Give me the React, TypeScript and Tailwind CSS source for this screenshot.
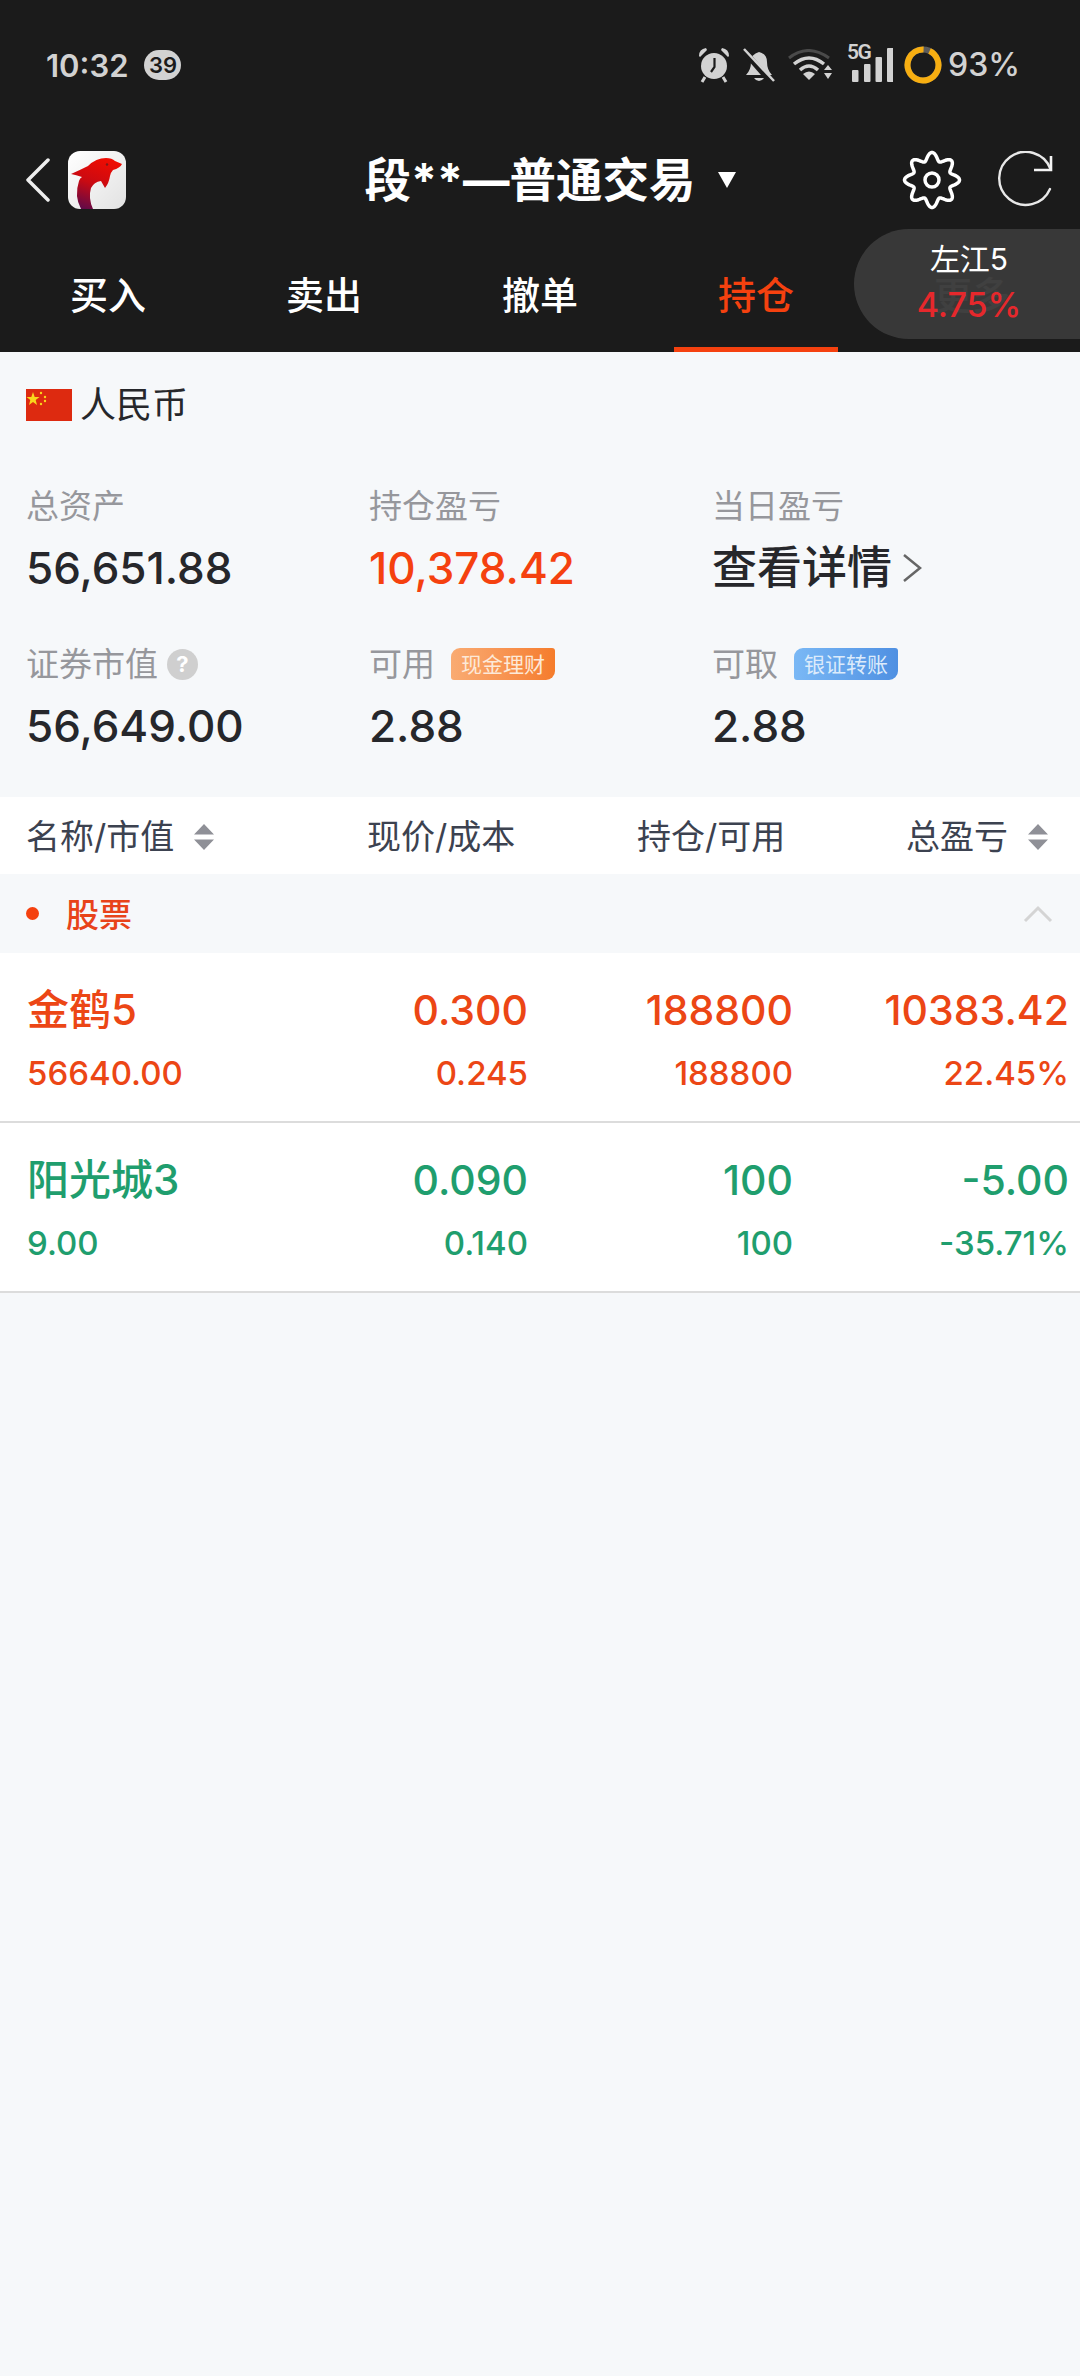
import React from "react";

const FONT = "font-['Inter','Noto_Sans_CJK_SC',sans-serif]";

function flowerPath() {
  const pts: string[] = [];
  for (let i = 0; i < 240; i++) {
    const t = (i / 240) * Math.PI * 2;
    const r = 23.5 + 4 * Math.cos(8 * t);
    pts.push(`${(30 + r * Math.sin(t)).toFixed(2)} ${(30 - r * Math.cos(t)).toFixed(2)}`);
  }
  return "M" + pts.join(" L") + " Z";
}
const FLOWER = flowerPath();

function Alarm() {
  return (
    <svg width="32" height="36" viewBox="0 0 32 36" className="shrink-0">
      <path d="M1 9 Q1 2 8 1 L9 3 L2 10 Z M31 9 Q31 2 24 1 L23 3 L30 10 Z" fill="#d2d2d2" />
      <circle cx="16" cy="19" r="13" fill="#d2d2d2" />
      <path d="M16.500 11 V20 L13 25" stroke="#1b1b1b" strokeWidth="2.200" fill="none" />
      <path d="M7 30 L4 35 M25 30 L28 35" stroke="#d2d2d2" strokeWidth="3" />
    </svg>
  );
}
function BellOff() {
  return (
    <svg width="32" height="34" viewBox="0 0 32 34" className="shrink-0">
      <path d="M3 27 Q8 22 8 14 Q8 6 16 4 Q24 6 24 14 Q24 22 29 27 Z" fill="#d2d2d2" />
      <path d="M11 30 H21 Q19 33 16 33 Q13 33 11 30Z" fill="#d2d2d2" />
      <path d="M0 2 L28 34" stroke="#1b1b1b" strokeWidth="6" />
      <path d="M1 1 L31 33" stroke="#d2d2d2" strokeWidth="2.500" />
    </svg>
  );
}
function Wifi() {
  return (
    <svg width="46" height="32" viewBox="0 0 46 32" className="shrink-0">
      <path d="M1 9 Q20 -6 41 9" stroke="#4a4a4a" strokeWidth="3" fill="none" />
      <path d="M6 15 Q21 3 36 15" stroke="#d2d2d2" strokeWidth="3.500" fill="none" />
      <path d="M12 21 Q21 13 30 21" stroke="#d2d2d2" strokeWidth="3.500" fill="none" />
      <path d="M15 25 Q21 20 27 25 L21 31 Z" fill="#d2d2d2" />
      <path d="M36 21 L40 16 L44 21 Z M36 24 H44 L40 30 Z" fill="#d2d2d2" />
    </svg>
  );
}
function Signal() {
  return (
    <svg width="46" height="34" viewBox="0 0 46 34" className="shrink-0">
      <rect x="5" y="22" width="6.500" height="12" rx="1" fill="#d2d2d2" />
      <rect x="17" y="16" width="6.500" height="18" rx="1" fill="#d2d2d2" />
      <rect x="28.500" y="9" width="6.500" height="25" rx="1" fill="#d2d2d2" />
      <rect x="40" y="0" width="6.500" height="34" rx="1" fill="#d2d2d2" />
    </svg>
  );
}
function Ring() {
  return (
    <svg width="38" height="38" viewBox="0 0 38 38" className="shrink-0">
      <circle cx="19" cy="19" r="15.500" fill="none" stroke="#5c5c5c" strokeWidth="6" />
      <circle cx="19" cy="19" r="15.500" fill="none" stroke="#f7ae11" strokeWidth="6" strokeDasharray="90.600 97.400" transform="rotate(-65 19 19)" />
    </svg>
  );
}
function Logo() {
  return (
    <div className="w-[58px] h-[58px] rounded-[12px] bg-gradient-to-br from-[#ffffff] to-[#e2e2e2] overflow-hidden shrink-0">
      <svg width="58" height="58" viewBox="0 0 58 58">
        <defs>
          <linearGradient id="dolphin" x1="0.6" y1="0" x2="0.25" y2="1">
            <stop offset="0" stopColor="#ee0c02" />
            <stop offset="0.5" stopColor="#c90a12" />
            <stop offset="1" stopColor="#620a48" />
          </linearGradient>
        </defs>
        <path d="M3 23 Q12 19 20 15 Q28 7 38 7 Q44 7 47 10 L54 13 Q52 17 45 19 Q43 21 42 25 Q41 32 37 37 L33 30 Q26 31 23 37 Q20 47 25 58 H13 Q6 45 11 30 Q12 27 14 26 Q8 24 3 23 Z" fill="url(#dolphin)" />
        <circle cx="39" cy="13.500" r="1.200" fill="#7a1a1a" />
      </svg>
    </div>
  );
}
function Gear() {
  return (
    <svg width="60" height="60" viewBox="0 0 60 60" className="shrink-0">
      <path d={FLOWER} fill="none" stroke="#fff" strokeWidth="3.500" strokeLinejoin="round" />
      <circle cx="30" cy="30" r="7" fill="none" stroke="#fff" strokeWidth="3.500" />
    </svg>
  );
}
function Refresh() {
  return (
    <svg width="58" height="58" viewBox="0 0 58 58" className="shrink-0">
      <path d="M53 38 A26.500 26.500 0 1 1 53.500 18" fill="none" stroke="#e8e8e8" strokeWidth="2.400" strokeLinecap="round" />
      <path d="M54 5 V19 H37" fill="none" stroke="#f4f4f4" strokeWidth="2.600" />
    </svg>
  );
}
function SortIcon() {
  return (
    <svg width="20" height="26" viewBox="0 0 20 26" className="shrink-0">
      <path d="M10 0 L20 10.500 H0 Z M0 15.500 H20 L10 26 Z" fill="#8f9097" />
    </svg>
  );
}

function Stat({ label, value, tone, extra }: { label: string; value: React.ReactNode; tone?: string; extra?: React.ReactNode }) {
  return (
    <div className="flex flex-col">
      <div className="flex items-center h-[36px] text-[33px] leading-[36px] text-[#96979c]">
        <span>{label}</span>
        {extra}
      </div>
      <div className={`mt-[26px] h-[36px] flex items-center text-[44px] font-medium leading-[36px] ${tone ?? "text-[#26272b]"}`}>{value}</div>
    </div>
  );
}

function Row({ c, name, sub, a, b, d, e, f, g }: { c: string; name: string; sub: string; a: string; b: string; d: string; e: string; f: string; g: string }) {
  return (
    <div className={`bg-white h-[170px] border-b-2 border-[#dcdcdc] pl-[27px] pr-[11px] pt-[37px] font-medium ${c}`}>
      <div className="flex items-center h-[40px] text-[41px] leading-[40px]">
        <div className="flex-1 text-[42px]">{name}</div>
        <div className="w-[270px] text-right">{a}</div>
        <div className="w-[265px] text-right">{d}</div>
        <div className="w-[276px] text-right">{f}</div>
      </div>
      <div className="flex items-center h-[36px] mt-[25px] text-[33px] leading-[36px]">
        <div className="flex-1">{sub}</div>
        <div className="w-[270px] text-right">{b}</div>
        <div className="w-[265px] text-right">{e}</div>
        <div className="w-[276px] text-right">{g}</div>
      </div>
    </div>
  );
}

export default function App() {
  const tabs = ["买入", "卖出", "撤单", "持仓", "更多"];
  return (
    <div className={`w-[1080px] h-[2376px] bg-[#f6f8fa] overflow-hidden ${FONT}`}>
      <div className="bg-[#1b1b1b] h-[352px] relative">
        <div className="flex items-center h-[130px] pl-[46px] pr-[60px] text-[#d2d2d2]">
          <span className="text-[31px] font-semibold leading-none">10:32</span>
          <span className="ml-[16px] w-[37px] h-[30px] rounded-full bg-[#d2d2d2] text-[#1b1b1b] text-[22px] font-semibold flex items-center justify-center leading-none">39</span>
          <div className="flex-1" />
          <div className="flex items-center gap-[13px]">
            <Alarm />
            <BellOff />
            <Wifi />
            <div className="relative">
              <Signal />
              <span className="absolute left-0 top-[-6px] text-[21px] font-semibold leading-none font-['Roboto'] tracking-[-1.5px]">5G</span>
            </div>
          </div>
          <div className="ml-[11px]"><Ring /></div>
          <span className="ml-[6px] text-[32px] font-medium leading-none">93%</span>
        </div>
        <div className="flex items-center h-[60px] mt-[20px] pl-[26px] pr-[25px] relative">
          <svg width="24" height="44" viewBox="0 0 24 44" className="shrink-0">
            <path d="M22 2 L2 22 L22 42" fill="none" stroke="#eee" strokeWidth="3.500" strokeLinecap="round" strokeLinejoin="round" />
          </svg>
          <div className="ml-[18px]"><Logo /></div>
          <div className="flex-1 flex items-center justify-center pl-[72px] text-white font-bold text-[46.5px] leading-none">
            <span>段**—普通交易</span>
            <svg width="18" height="16" viewBox="0 0 18 16" className="ml-[22px]"><path d="M0 0 H18 L9 16 Z" fill="#fff" /></svg>
          </div>
          <Gear />
          <div className="ml-[35px]"><Refresh /></div>
        </div>
        <div className="flex h-[100px] mt-[42px] relative">
          {tabs.map((t, i) => (
            <div key={t} className={`w-[216px] flex justify-center ${i === 3 ? "text-[#f5410f]" : "text-white"} text-[38px] font-medium`}>
              <div className={`h-[100px] flex items-center ${i === 3 ? "w-[164px] justify-center border-b-[5px] border-[#f5410f] pb-[9px]" : "pb-[14px]"}`}>{t}</div>
            </div>
          ))}
          <div className="absolute left-[854px] top-[-23px] w-[226px] h-[110px] rounded-l-[55px] bg-[#3a3a3a]/97 flex flex-col items-center pl-[4px] pt-[8px]">
            <span className="text-white text-[30px] leading-[44px]">左江5</span>
            <span className="text-[#e6282c] text-[34px] font-medium leading-[47px]">4.75%</span>
          </div>
        </div>
      </div>

      <div className="h-[445px] pl-[26px]">
        <div className="flex items-center h-[106px]">
          <svg width="46" height="32" viewBox="0 0 46 32" className="shrink-0">
            <rect width="46" height="32" fill="#dd2a10" />
            <path d="M7 3 L8.700 8 L13.500 8 L9.700 11 L11 16 L7 13 L3 16 L4.300 11 L0.500 8 L5.300 8 Z" fill="#f9d71c" />
            <circle cx="15" cy="4" r="1.200" fill="#f9d71c" />
            <circle cx="19" cy="8" r="1.200" fill="#f9d71c" />
            <circle cx="19" cy="12" r="1.200" fill="#f9d71c" />
            <circle cx="15" cy="15" r="1.200" fill="#f9d71c" />
          </svg>
          <span className="ml-[8px] text-[36px] text-[#26272b] leading-none">人民币</span>
        </div>
        <div className="grid grid-cols-[343px_343px_1fr] gap-y-[60px] mt-[30px]">
          <Stat label="总资产" value="56,651.88" />
          <Stat label="持仓盈亏" value="10,378.42" tone="text-[#f5410f]" />
          <Stat
            label="当日盈亏"
            value={
              <>
                <span className="text-[45px]">查看详情</span>
                <svg width="22" height="32" viewBox="0 0 22 32" className="ml-[9px]"><path d="M3 3 L19 16 L3 29" fill="none" stroke="#666" strokeWidth="2.500" /></svg>
              </>
            }
          />
          <Stat
            label="证券市值"
            value="56,649.00"
            extra={<span className="ml-[9px] w-[31px] h-[31px] rounded-full bg-[#cfcfcf] text-white text-[22px] font-bold flex items-center justify-center leading-none">?</span>}
          />
          <Stat
            label="可用"
            value="2.88"
            extra={<span className="ml-[16px] h-[32px] w-[104px] rounded-tl-[9px] rounded-br-[9px] rounded-tr-[3px] rounded-bl-[3px] bg-gradient-to-r from-[#f9ab72] to-[#f57c2a] text-[#fde9d8] text-[21px] flex items-center justify-center leading-none">现金理财</span>}
          />
          <Stat
            label="可取"
            value="2.88"
            extra={<span className="ml-[16px] h-[32px] w-[104px] rounded-tl-[9px] rounded-br-[9px] rounded-tr-[3px] rounded-bl-[3px] bg-gradient-to-r from-[#7ab8f5] to-[#4f90e2] text-[#dcebfb] text-[21px] flex items-center justify-center leading-none">银证转账</span>}
          />
        </div>
      </div>

      <div className="bg-white h-[77px] flex items-center pl-[26px] pr-[32px] pt-[2px] text-[#3c4250] text-[34px] leading-none">
        <div className="flex items-center w-[341px]">
          <span>名称/市值</span>
          <span className="ml-[20px]"><SortIcon /></span>
        </div>
        <div className="w-[169px]">现价/成本</div>
        <div className="ml-[101px] w-[150px]">持仓/可用</div>
        <div className="flex-1 flex items-center justify-end">
          <span>总盈亏</span>
          <span className="ml-[20px]"><SortIcon /></span>
        </div>
      </div>
      <div className="h-[79px] flex items-center pl-[26px] pr-[27px] text-[#e8431a]">
        <span className="w-[13px] h-[13px] rounded-full bg-[#f5410f]" />
        <span className="ml-[27px] pt-[5px] text-[33px] font-medium flex-1">股票</span>
        <svg width="30" height="18" viewBox="0 0 30 18"><path d="M2 16 L15 3 L28 16" fill="none" stroke="#d4d4d4" strokeWidth="3" /></svg>
      </div>
      <Row c="text-[#ec4615]" name="金鹤5" sub="56640.00" a="0.300" b="0.245" d="188800" e="188800" f="10383.42" g="22.45%" />
      <Row c="text-[#1f9e6e]" name="阳光城3" sub="9.00" a="0.090" b="0.140" d="100" e="100" f="-5.00" g="-35.71%" />
    </div>
  );
}
